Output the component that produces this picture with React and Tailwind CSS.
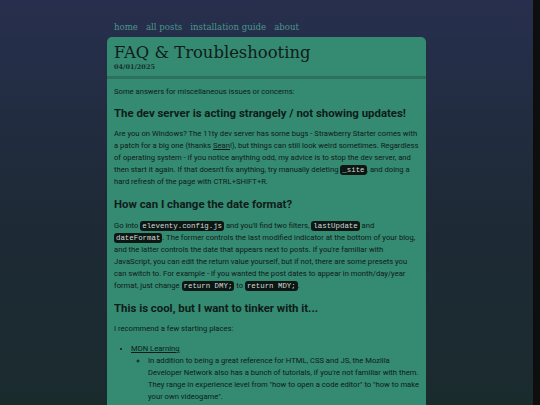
import React from "react";

function Code({ children }) {
  return (
    <code className="rounded-[3px] bg-[#0c1613] px-[2px] py-[1px] font-['Liberation_Mono',monospace] text-[7.4px] text-[#d3dcd8]">
      {children}
    </code>
  );
}

export default function App() {
  return (
    <div className="flex h-[405px] w-[540px] overflow-hidden">
      <div className="h-full flex-1 bg-gradient-to-b from-[#272f4e] via-[#1e2a37] to-[#1a2b2e]">
        <div className="mx-auto w-[319px]">
          <nav className="flex gap-[8px] px-[7px] pt-[20px] pb-[3px] font-['DejaVu_Serif',serif] text-[8.6px] leading-[14px] text-[#4b978a]">
            <span>home</span>
            <span>all posts</span>
            <span>installation guide</span>
            <span>about</span>
          </nav>
          <div className="rounded-t-[5px] bg-[#358a72] text-[#0e1c18]">
            <header className="border-b-[3px] border-[#2d705e] px-[7px] pt-[6px] pb-[4px]">
              <h1 className="font-['DejaVu_Serif',serif] text-[16.4px] leading-[20px]">FAQ &amp; Troubleshooting</h1>
              <div className="font-['DejaVu_Serif',serif] text-[6.5px] font-bold leading-[9px] text-[#15302a]">04/01/2025</div>
            </header>
            <main className="pl-[7px] pr-[4px] pt-[7px] pb-[20px] font-['Roboto',sans-serif] text-[7.65px] leading-[12px]">
              <p>Some answers for miscellaneous issues or concerns:</p>
              <h2 className="mt-[8px] mb-[8px] text-[11.4px] font-bold leading-[14px]">
                The dev server is acting strangely / not showing updates!
              </h2>
              <p className="pr-[3px]">
                Are you on Windows? The 11ty dev server has some bugs - Strawberry Starter comes with a patch for a big one (thanks{" "}
                <span className="underline">Sean</span>!), but things can still look weird sometimes. Regardless of operating system - if you notice anything odd, my advice is to stop the dev server, and then start it again. If that doesn't fix anything, try manually deleting <Code>_site</Code>, and doing a hard refresh of the page with CTRL+SHIFT+R.
              </p>
              <h2 className="mt-[9px] mb-[9px] text-[11.4px] font-bold leading-[14px]">How can I change the date format?</h2>
              <p className="pr-[3px]">
                Go into <Code>eleventy.config.js</Code> and you'll find two filters, <Code>lastUpdate</Code> and{" "}
                <Code>dateFormat</Code>. The former controls the last modified indicator at the bottom of your blog, and the latter controls the date that appears next to posts. If you're familiar with JavaScript, you can edit the return value yourself, but if not, there are some presets you can switch to. For example - if you wanted the post dates to appear in month/day/year format, just change <Code>return DMY;</Code> to <Code>return MDY;</Code>.
              </p>
              <h2 className="mt-[9px] mb-[8px] text-[11.4px] font-bold leading-[14px]">This is cool, but I want to tinker with it...</h2>
              <p>I recommend a few starting places:</p>
              <ul className="mt-[8px] list-disc pl-[17px]">
                <li>
                  <span className="underline">MDN Learning</span>
                  <ul className="list-[circle] pl-[17px]">
                    <li>
                      In addition to being a great reference for HTML, CSS and JS, the Mozilla Developer Network also has a bunch of tutorials, if you're not familiar with them. They range in experience level from "how to open a code editor" to "how to make your own videogame".
                    </li>
                  </ul>
                </li>
              </ul>
            </main>
          </div>
        </div>
      </div>
      <div className="h-full w-[7px] bg-[#0e0e0e]" />
    </div>
  );
}
